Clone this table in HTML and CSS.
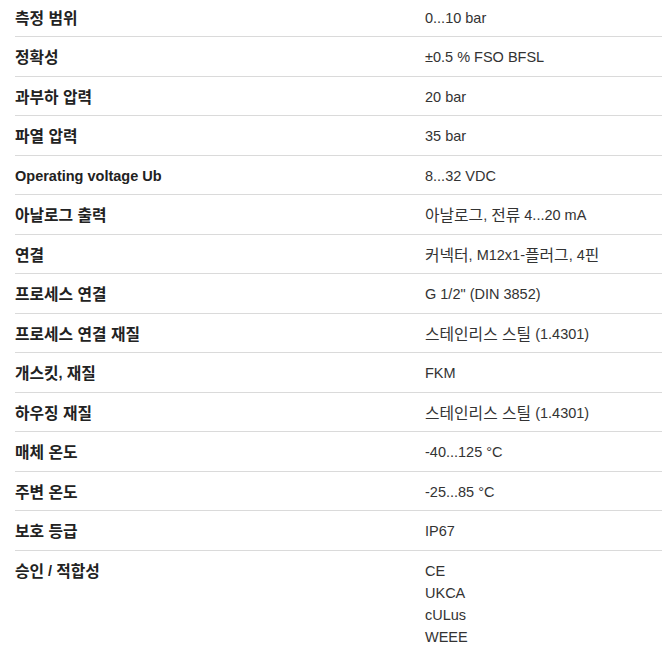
FILE: index.html
```html
<!DOCTYPE html>
<html lang="ko">
<head>
<meta charset="utf-8">
<link rel="stylesheet" href="styles.css">
</head>
<body>
<div class="specs">
  <div class="row"><div class="label"><span class="ko">측정 범위</span></div><div class="value">0...10 bar</div></div>
  <div class="row"><div class="label"><span class="ko">정확성</span></div><div class="value">±0.5 % FSO BFSL</div></div>
  <div class="row"><div class="label"><span class="ko">과부하 압력</span></div><div class="value">20 bar</div></div>
  <div class="row"><div class="label"><span class="ko">파열 압력</span></div><div class="value">35 bar</div></div>
  <div class="row"><div class="label">Operating voltage Ub</div><div class="value">8...32 VDC</div></div>
  <div class="row"><div class="label"><span class="ko">아날로그 출력</span></div><div class="value"><span class="ko">아날로그</span>, <span class="ko">전류</span> 4...20 mA</div></div>
  <div class="row"><div class="label"><span class="ko">연결</span></div><div class="value"><span class="ko">커넥터</span>, M12x1-<span class="ko">플러그</span>, 4<span class="ko">핀</span></div></div>
  <div class="row"><div class="label"><span class="ko">프로세스 연결</span></div><div class="value">G 1/2" (DIN 3852)</div></div>
  <div class="row"><div class="label"><span class="ko">프로세스 연결 재질</span></div><div class="value"><span class="ko">스테인리스 스틸</span> (1.4301)</div></div>
  <div class="row"><div class="label"><span class="ko">개스킷</span>, <span class="ko">재질</span></div><div class="value">FKM</div></div>
  <div class="row"><div class="label"><span class="ko">하우징 재질</span></div><div class="value"><span class="ko">스테인리스 스틸</span> (1.4301)</div></div>
  <div class="row"><div class="label"><span class="ko">매체 온도</span></div><div class="value">-40...125 °C</div></div>
  <div class="row"><div class="label"><span class="ko">주변 온도</span></div><div class="value">-25...85 °C</div></div>
  <div class="row"><div class="label"><span class="ko">보호 등급</span></div><div class="value">IP67</div></div>
  <div class="row last"><div class="label"><span class="ko">승인</span> / <span class="ko">적합성</span></div><div class="value">CE<br>UKCA<br>cULus<br>WEEE</div></div>
</div>
</body>
</html>
```
FILE: styles.css
```css
html, body {
  margin: 0;
  padding: 0;
  background: #ffffff;
}
.specs {
  padding-left: 15px;
  font-family: "Liberation Sans", "Noto Sans CJK KR", sans-serif;
  font-size: 14.5px;
  color: #333333;
}
.row {
  display: flex;
  padding: 9px 0 7.5px;
  line-height: 22px;
  border-bottom: 1px solid #dadada;
}
.row:first-child {
  padding-top: 6.5px;
}
.row.last {
  border-bottom: none;
}
.label {
  width: 410px;
  flex: none;
  font-weight: 700;
  color: #222222;
}
.value {
  flex: 1;
  color: #333333;
}
.ko {
  font-family: "Noto Sans CJK KR", sans-serif;
  font-size: 15.8px;
  vertical-align: top;
}
```
